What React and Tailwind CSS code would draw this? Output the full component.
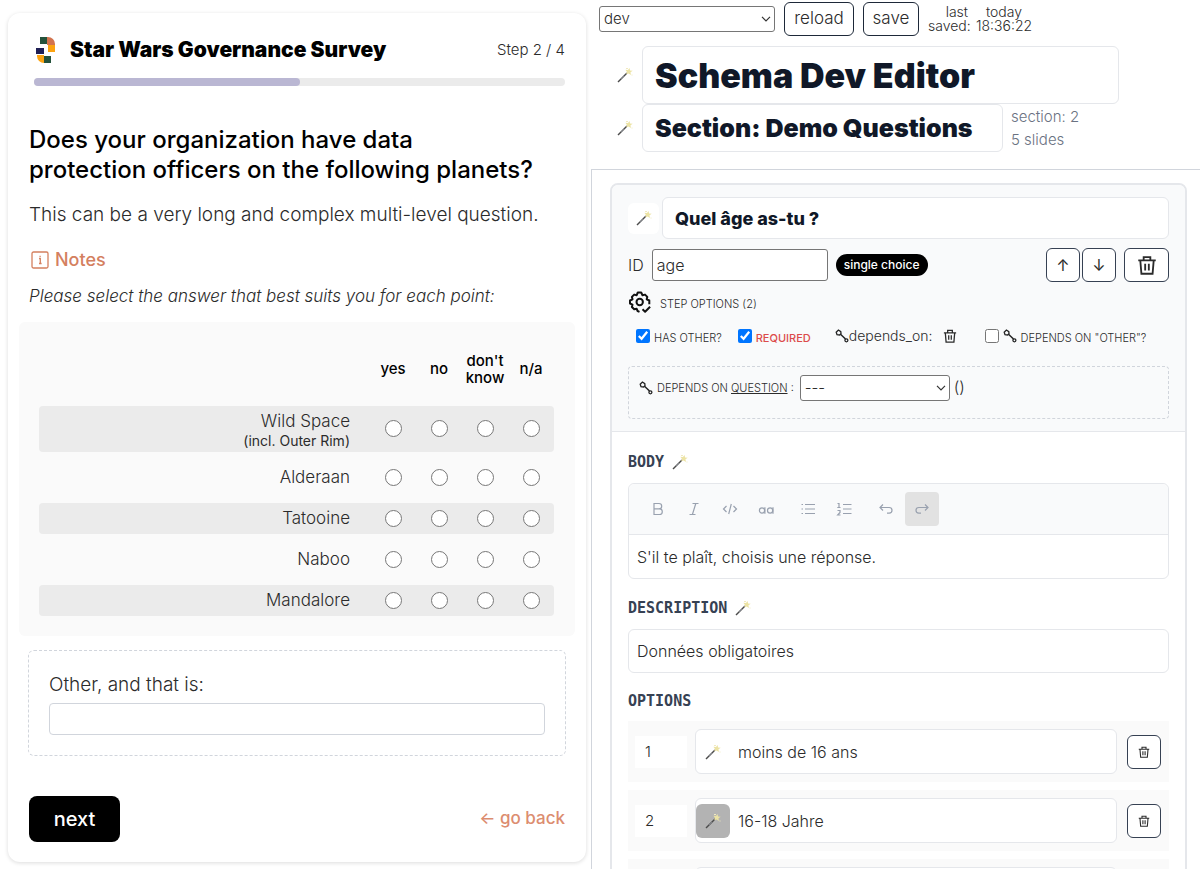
import { useState } from "react";
import clsx from "clsx";

const ANSWERS = ["yes", "no", "don't know", "n/a"];

const PLANETS = [
  { name: "Wild Space", hint: "(incl. Outer Rim)" },
  { name: "Alderaan" },
  { name: "Tatooine" },
  { name: "Naboo" },
  { name: "Mandalore" },
];

const Logo = () => (
  <svg viewBox="0 0 20 26" className="h-[26px] w-5" aria-hidden="true">
    <rect x="4" y="0" width="7" height="7" fill="#24523b" />
    <path d="M11 0h1a7 7 0 0 1 7 7v1h-8z" fill="#d2734f" />
    <path d="M12 8h7v7h-7z" fill="#fca311" />
    <path d="M0 11h8v6H0z" fill="#1f1f55" />
    <path d="M1 18h7v8a7 7 0 0 1-7-7z" fill="#fca311" />
    <rect x="8" y="19" width="7" height="7" fill="#24523b" />
  </svg>
);

const Wand = () => (
  <svg viewBox="0 0 16 16" className="size-4" aria-hidden="true">
    <path d="M1 15 10 6" stroke="#4b4b4b" strokeWidth="1.5" />
    <path d="M4 12l3-3" stroke="#9ca3af" strokeWidth="0.6" />
    <path
      d="m12.5 1 .6 2.4 2.6.4-2.2 1.5.4 2.6-2.3-1.3-2.4.7.8-2.4L8.4 2.7l2.6.3z"
      fill="#ece3a4"
    />
    <path d="M9 1.5h2M14.5 8h1" stroke="#f0eac0" strokeWidth="1" />
  </svg>
);

const Trash = ({ className }) => (
  <svg
    viewBox="0 0 24 24"
    fill="none"
    stroke="currentColor"
    strokeWidth="2.2"
    className={className}
    aria-hidden="true"
  >
    <path d="M1.5 6.500h21M8 6V2.500h8V6M4 7l1.300 15.500h13.400L20 7M9.800 10.500v8M14.200 10.500v8" />
  </svg>
);

const Chain = () => (
  <svg
    viewBox="0 0 14 14"
    fill="none"
    stroke="#222"
    className="size-3.5 shrink-0"
    aria-hidden="true"
  >
    <path
      d="M1.200 3.200 3.400 1l2.400 1.600.200 2.200-1.400 1.200-2.600-.4z"
      strokeWidth="1.3"
    />
    <path d="M5.500 5.300 10.500 10" strokeWidth="1.5" />
    <circle cx="11.4" cy="11.3" r="1.5" strokeWidth="1.3" />
  </svg>
);

const Gear = () => (
  <svg
    viewBox="0 0 24 24"
    fill="none"
    stroke="#111"
    strokeWidth="2"
    strokeLinejoin="round"
    className="size-6"
    aria-hidden="true"
  >
    <path d="M11.500 21.800 9.600 21l-.9-2.200-2.500.5-2.300-2.300.6-2.400L2 13.500v-3l2.500-1.200-.6-2.400 2.300-2.300 2.500.6L9.800 2.500h3.400l1.300 2.700 2.500-.6 2.300 2.300-.6 2.400 2.600 1.200v3.800" />
    <circle cx="11.7" cy="12" r="3.2" />
    <path d="m14.500 19.300 2.600 2.400 5-5" />
  </svg>
);

const InfoIcon = () => (
  <svg
    viewBox="0 0 18 18"
    fill="none"
    stroke="currentColor"
    strokeWidth="1.3"
    className="size-[18px]"
    aria-hidden="true"
  >
    <rect x="1" y="1" width="16" height="16" rx="1.5" />
    <path d="M8 7.500h1.300v5M8 12.500h2.600M8.500 5.300h1.200" />
  </svg>
);

const WandButton = ({ label, className }) => (
  <button
    type="button"
    aria-label={label}
    className={clsx("flex items-center justify-center rounded-md", className)}
  >
    <Wand />
  </button>
);

const Select = ({ option, className, ...props }) => (
  <div className={clsx("relative shrink-0", className)}>
    <select
      {...props}
      className="h-[26px] w-full appearance-none rounded-[3px] border border-[#767676] bg-white px-1 text-[15px] font-light"
    >
      <option>{option}</option>
    </select>
    <svg
      viewBox="0 0 10 6"
      fill="none"
      stroke="#333"
      strokeWidth="1.2"
      className="pointer-events-none absolute top-2.5 right-1 h-1.5 w-2.5"
      aria-hidden="true"
    >
      <path d="m1 .8 4 4 4-4" />
    </svg>
  </div>
);

const ToolButton = ({ label, active, children }) => (
  <button
    type="button"
    aria-label={label}
    className={clsx(
      "flex h-[34px] w-[34px] items-center justify-center rounded",
      active && "bg-[#e2e2e2]"
    )}
  >
    <svg
      viewBox="0 0 16 16"
      fill="none"
      stroke="currentColor"
      strokeWidth="1.2"
      className="size-4"
      aria-hidden="true"
    >
      {children}
    </svg>
  </button>
);

const SectionTitle = ({ children, wand }) => (
  <h3 className="flex h-5 items-center gap-2 font-['DejaVu_Sans_Mono',monospace] text-[15px] font-bold text-gray-700">
    {children}
    {wand && <WandButton label={`Translate ${children}`} />}
  </h3>
);

// Left side: the survey as the visitor sees it
const SurveyPreview = () => {
  const [other, setOther] = useState("");

  return (
    <div className="pt-[13px] pr-[5px] pl-2">
      <main className="rounded-xl bg-white px-[21px] pb-5 shadow-[0_1px_4px_rgba(0,0,0,0.14)]">
        <header className="ml-[5px] pt-[23px]">
          <div className="flex h-7 items-center">
            <div className="pl-0.5">
              <Logo />
            </div>
            <h1 className="ml-3.5 text-[21px] font-black text-black">
              Star Wars Governance Survey
            </h1>
            <span className="ml-auto text-[15px] font-light">Step 2 / 4</span>
          </div>
          <div className="mt-3.5 h-2 rounded-full bg-[#ebebeb]">
            <div className="h-full w-1/2 rounded-full bg-[#bab7d3]" />
          </div>
        </header>

        <h2 className="mt-[39px] text-2xl leading-[30px] font-medium text-black">
          Does your organization have data
          <br />
          protection officers on the following planets?
        </h2>
        <p className="mt-4 text-[19px] font-light whitespace-nowrap">
          This can be a very long and complex multi-level question.
        </p>
        <h3 className="mt-4 flex items-center gap-1.5 pl-0.5 text-lg font-medium text-[#d4805f]">
          <InfoIcon />
          Notes
        </h3>
        <p className="mt-2.5 text-[17px] leading-6 font-light italic">
          Please select the answer that best suits you for each point:
        </p>

        <div className="-mx-2.5 mt-3.5 rounded-md bg-[#fafafa] pt-2.5 pr-[21px] pb-2.5 pl-5">
          <table className="w-full table-fixed border-separate border-spacing-x-0 border-spacing-y-2.5">
            <thead>
              <tr className="h-[54px]">
                <td />
                {ANSWERS.map((answer) => (
                  <th
                    key={answer}
                    scope="col"
                    className="w-[46px] text-[15px] leading-[17px] font-medium text-black"
                  >
                    {answer}
                  </th>
                ))}
              </tr>
            </thead>
            <tbody>
              {PLANETS.map((planet) => (
                <tr
                  key={planet.name}
                  className={clsx(
                    "odd:bg-[#ebebeb]",
                    planet.hint ? "h-[46px]" : "h-[31px]"
                  )}
                >
                  <th
                    scope="row"
                    className="rounded-l pr-5 text-right text-[17px] leading-6 font-light"
                  >
                    {planet.name}
                    {planet.hint && (
                      <div className="text-sm leading-4 font-normal">
                        {planet.hint}
                      </div>
                    )}
                  </th>
                  {ANSWERS.map((answer) => (
                    <td key={answer} className="last:rounded-r">
                      <input
                        type="radio"
                        name={planet.name}
                        aria-label={`${planet.name}: ${answer}`}
                        className="mx-auto block size-[17px]"
                      />
                    </td>
                  ))}
                </tr>
              ))}
            </tbody>
          </table>
        </div>

        <div className="mt-3.5 -mx-px rounded-md border border-dashed border-gray-300 p-5">
          <label htmlFor="other" className="block text-[19px] font-light">
            Other, and that is:
          </label>
          <input
            id="other"
            value={other}
            onChange={(e) => setOther(e.target.value)}
            className="mt-1 block h-8 w-full rounded border border-gray-300 px-2"
          />
        </div>

        <div className="mt-10 flex items-center justify-between">
          <button
            type="button"
            className="h-[46px] w-[91px] rounded-lg bg-black text-xl font-medium text-white"
          >
            next
          </button>
          <a href="#back" className="text-[17px] font-medium text-[#dc8d70]">
            ← go back
          </a>
        </div>
      </main>
    </div>
  );
};

const OptionRow = ({ number, label, active }) => (
  <li className="flex items-center bg-[#fafafa] py-2 pr-2 pl-[7px]">
    <input
      aria-label={`Position of option ${number}`}
      defaultValue={number}
      className="h-8 w-[52px] bg-white px-2.5 text-[15px]"
    />
    <div className="ml-2 flex h-[45px] flex-1 items-center rounded-md border border-gray-200 bg-white">
      <WandButton
        label={`Translate option ${number}`}
        className={clsx("size-[34px]", active && "bg-[#b3b3b3]")}
      />
      <input
        aria-label={`Option ${number}`}
        defaultValue={label}
        className="h-full min-w-0 flex-1 px-2"
      />
    </div>
    <button
      type="button"
      aria-label={`Delete option ${number}`}
      className="ml-2.5 flex size-[34px] items-center justify-center rounded-md border border-gray-700 bg-white"
    >
      <Trash className="size-3" />
    </button>
  </li>
);

// Right side: the schema editor
const SchemaEditor = () => (
  <div className="min-w-0">
    <div className="flex items-center gap-[9px] pt-0.5 pl-2">
      <Select aria-label="Schema" option="dev" className="w-[176px]" />
      <button
        type="button"
        className="h-[34px] w-[70px] rounded-md border border-gray-800 text-[17px] font-light"
      >
        reload
      </button>
      <button
        type="button"
        className="h-[34px] w-14 rounded-md border border-gray-800 text-[17px] font-light"
      >
        save
      </button>
      <div className="flex gap-2 text-sm leading-[14px] font-light">
        <p className="w-10 text-right">last saved:</p>
        <p className="w-14 text-center">today 18:36:22</p>
      </div>
    </div>

    <div className="mt-2.5 ml-4 w-[512px]">
      <div className="flex items-center">
        <WandButton label="Translate title" className="w-[35px]" />
        <input
          aria-label="Title"
          defaultValue="Schema Dev Editor"
          className="h-[58px] min-w-0 flex-1 rounded-md border border-gray-200 px-3 text-[34px] font-black text-gray-900"
        />
      </div>
      <div className="flex items-center">
        <WandButton label="Translate section" className="w-[35px]" />
        <input
          aria-label="Section"
          defaultValue="Section: Demo Questions"
          className="h-12 w-[361px] rounded-md border border-gray-200 px-3 text-[25px] font-black text-gray-900"
        />
        <div className="ml-2 text-[15px] leading-[23px] font-light text-gray-500">
          <p>section: 2</p>
          <p>5 slides</p>
        </div>
      </div>
    </div>

    <div className="mt-[17px] border-t border-l border-gray-300 pt-[13px] pr-[13px] pl-[18px]">
      <section className="rounded-lg border-2 border-gray-200">
        <div className="rounded-t-md border-b border-gray-200 bg-[#f9fafb] px-4 pt-3 pb-3">
          <div className="flex items-center gap-[3px]">
            <WandButton
              label="Translate question"
              className="size-[31px] bg-white"
            />
            <input
              aria-label="Question"
              defaultValue="Quel âge as-tu ?"
              className="h-[42px] min-w-0 flex-1 rounded-md border border-gray-200 bg-white px-3 text-lg font-extrabold text-gray-900"
            />
          </div>

          <div className="mt-[9px] flex items-center">
            <label htmlFor="step-id" className="font-light">
              ID
            </label>
            <input
              id="step-id"
              defaultValue="age"
              className="ml-2 h-8 w-[176px] rounded-[3px] border border-[#767676] bg-white px-1 font-light"
            />
            <span className="ml-2 rounded-full bg-black px-2 text-xs leading-[22px] font-medium whitespace-nowrap text-white">
              single choice
            </span>
            <button
              type="button"
              aria-label="Move up"
              className="ml-auto size-[34px] rounded-md border border-gray-700 bg-white"
            >
              ↑
            </button>
            <button
              type="button"
              aria-label="Move down"
              className="ml-0.5 size-[34px] rounded-md border border-gray-700 bg-white"
            >
              ↓
            </button>
            <button
              type="button"
              aria-label="Delete step"
              className="ml-2 flex h-[34px] w-[45px] items-center justify-center rounded-md border border-gray-700 bg-white"
            >
              <Trash className="size-5" />
            </button>
          </div>

          <div className="mt-2 flex h-6 items-center gap-2 text-[11px] font-light">
            <Gear />
            <span className="pt-1">STEP OPTIONS (2)</span>
          </div>

          <div className="mt-2.5 flex h-6 items-center pl-2 text-[11px] font-light whitespace-nowrap">
            <label className="flex items-center gap-1">
              <input type="checkbox" defaultChecked className="size-3.5" />
              <span className="pt-1">HAS OTHER?</span>
            </label>
            <label className="ml-4 flex items-center gap-1 font-medium text-[#dc4b4b]">
              <input type="checkbox" defaultChecked className="size-3.5" />
              <span className="pt-1">REQUIRED</span>
            </label>
            <span className="ml-6 flex items-center text-sm">
              <Chain />
              depends_on:
            </span>
            <button
              type="button"
              aria-label="Delete dependency"
              className="ml-2.5"
            >
              <Trash className="size-3.5" />
            </button>
            <label className="ml-7 flex items-center gap-1">
              <input type="checkbox" className="size-3.5" />
              <Chain />
              <span className="pt-1">DEPENDS ON "OTHER"?</span>
            </label>
          </div>

          <div className="mt-[18px] flex h-[53px] items-start rounded border border-dashed border-gray-300 px-2.5 pt-2">
            <label
              htmlFor="depends-on"
              className="flex h-[26px] items-center gap-1 text-[11px] font-light"
            >
              <Chain />
              <span>
                DEPENDS ON <u>QUESTION</u> :
              </span>
            </label>
            <Select id="depends-on" option="---" className="ml-1.5 w-[150px]" />
            <span className="ml-1 font-light">()</span>
          </div>
        </div>

        <div className="px-4 pt-5 font-light">
          <SectionTitle wand>BODY</SectionTitle>
          <div className="mt-[11px] rounded-md border border-gray-200">
            <div className="flex h-[51px] items-center gap-0.5 rounded-t-md border-b border-gray-200 bg-[#f9fafb] pl-3 text-gray-400">
              <ToolButton label="Bold">
                <path d="M4 2.500h5a2.700 2.700 0 0 1 0 5.400H4zM4 7.900h5.500a2.800 2.800 0 0 1 0 5.600H4z" />
              </ToolButton>
              <ToolButton label="Italic">
                <path d="M6.500 2.500h6M3.500 13.500h6M9.800 2.500l-3.400 11" />
              </ToolButton>
              <ToolButton label="Code">
                <path d="M4.500 5 1.500 8l3 3M11.500 5l3 3-3 3M9.300 3 6.700 13" />
              </ToolButton>
              <ToolButton label="Small text">
                <circle cx="4" cy="9.5" r="2.6" />
                <path d="M6.900 6.300v6.500M15 6.300v6.500" />
                <circle cx="12.1" cy="9.5" r="2.6" />
              </ToolButton>
              <div className="w-1" />
              <ToolButton label="Bullet list">
                <path d="M5 3.500h10M5 8h10M5 12.500h10M1.500 3.500h1.500M1.500 8h1.500M1.500 12.500h1.500" />
              </ToolButton>
              <ToolButton label="Numbered list">
                <path d="M7 3.500h8.500M7 8h8.500M7 12.500h8.500M1.500 2.500h1.500v4M1.300 6.500h3.200M1.500 9.500h2.500v2L1.700 14h2.800" />
              </ToolButton>
              <div className="w-1" />
              <ToolButton label="Undo">
                <path d="M5 3.500 2 6.500l3 3M2.500 6.500h8.700a2.800 2.800 0 0 1 0 5.600H9" />
              </ToolButton>
              <ToolButton label="Redo" active>
                <path d="m11 3.500 3 3-3 3M13.500 6.500H4.800a2.800 2.800 0 0 0 0 5.600H7" />
              </ToolButton>
            </div>
            <input
              aria-label="Body"
              defaultValue="S'il te plaît, choisis une réponse."
              className="block h-[43px] w-full px-2"
            />
          </div>

          <div className="mt-[19px]">
            <SectionTitle wand>DESCRIPTION</SectionTitle>
          </div>
          <input
            aria-label="Description"
            defaultValue="Données obligatoires"
            className="mt-[11px] block h-11 w-full rounded-md border border-gray-200 px-2"
          />

          <div className="mt-[18px]">
            <SectionTitle>OPTIONS</SectionTitle>
          </div>
          <ul className="mt-2.5 space-y-2">
            <OptionRow number="1" label="moins de 16 ans" />
            <OptionRow number="2" label="16-18 Jahre" active />
            <OptionRow number="3" label="19-25 Jahre" />
          </ul>
        </div>
      </section>
    </div>
  </div>
);

const App = () => (
  <div className="grid h-screen grid-cols-[591fr_609fr] overflow-hidden bg-white font-[Inter,sans-serif] text-base text-[#2b2b2b]">
    <SurveyPreview />
    <SchemaEditor />
  </div>
);

export default App;
